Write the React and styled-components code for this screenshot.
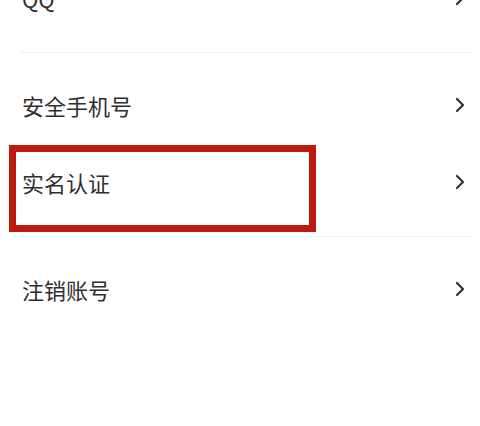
import React from 'react';
import styled, { createGlobalStyle } from 'styled-components';

const GlobalStyle = createGlobalStyle`
  html, body {
    margin: 0;
    padding: 0;
    background: #ffffff;
  }
  body {
    font-family: "Noto Sans CJK SC", "Noto Sans", sans-serif;
    overflow: hidden;
  }
`;

const List = styled.div`
  width: 480px;
  margin-top: -40px;
  background: #fff;
`;

const Row = styled.div`
  position: relative;
  height: 77px;
  display: flex;
  align-items: center;
  justify-content: space-between;
  padding: 0 14px 2px 22px;
  box-sizing: border-box;
`;

const Label = styled.span`
  font-size: 22px;
  color: #2e2e2e;
  line-height: 1;
`;

const Separator = styled.div`
  height: 30px;
  display: flex;
  align-items: center;
  padding: 0 10px 0 20px;

  &::after {
    content: '';
    flex: 1;
    height: 1px;
    background: #efefef;
  }
`;

const Highlight = styled.div`
  position: absolute;
  left: 9px;
  top: 1px;
  width: 307px;
  height: 87px;
  border: 7px solid #bf1a10;
  box-sizing: border-box;
  pointer-events: none;
`;

const Chevron = () => (
  <svg width="12" height="16" viewBox="0 0 12 16">
    <path d="M3 2 L9 8 L3 14" fill="none" stroke="#333" strokeWidth="2.2" strokeLinecap="round" strokeLinejoin="round" />
  </svg>
);

const Item = ({ label, marked }) => (
  <Row>
    <Label>{label}</Label>
    <Chevron />
    {marked && <Highlight />}
  </Row>
);

const App = () => (
  <>
    <GlobalStyle />
    <List>
      <Item label="QQ" />
      <Separator />
      <Item label="安全手机号" />
      <Item label="实名认证" marked />
      <Separator />
      <Item label="注销账号" />
    </List>
  </>
);

export default App;
